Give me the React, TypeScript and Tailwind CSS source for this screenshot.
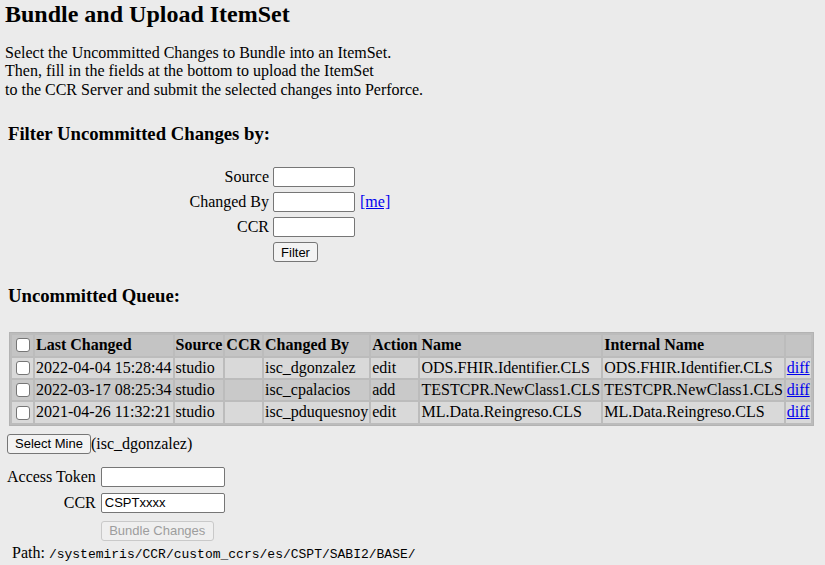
import React from 'react';

const rows = [
  { changed: '2022-04-04 15:28:44', source: 'studio', ccr: '', by: 'isc_dgonzalez', action: 'edit', name: 'ODS.FHIR.Identifier.CLS', internal: 'ODS.FHIR.Identifier.CLS' },
  { changed: '2022-03-17 08:25:34', source: 'studio', ccr: '', by: 'isc_cpalacios', action: 'add', name: 'TESTCPR.NewClass1.CLS', internal: 'TESTCPR.NewClass1.CLS' },
  { changed: '2021-04-26 11:32:21', source: 'studio', ccr: '', by: 'isc_pduquesnoy', action: 'edit', name: 'ML.Data.Reingreso.CLS', internal: 'ML.Data.Reingreso.CLS' },
];

const inputCls =
  "h-[20px] border border-[#767676] rounded-[2px] bg-white px-[3px] text-[13px] font-['Liberation_Sans',Arial,sans-serif] outline-none";
const buttonBase =
  "h-[20px] border rounded-[3px] px-[7px] text-[13px] leading-none font-['Liberation_Sans',Arial,sans-serif]";
const buttonCls = `${buttonBase} border-[#767676] bg-[#f3f3f3] text-black`;
const disabledCls = `${buttonBase} border-[#c9c9c9] bg-[#efefef] text-[#9d9d9d]`;
const checkCls =
  "appearance-none block w-[14px] h-[14px] border border-[#767676] rounded-[3px] bg-white ml-[3px] mr-[2px]";

export default function App() {
  return (
    <div className="min-h-[565px] bg-[#ebebeb] px-[5px] font-['Liberation_Serif','Times_New_Roman',serif] text-[16px] leading-[18.4px] text-black">
      <h1 className="text-[24px] font-bold leading-[28px]">Bundle and Upload ItemSet</h1>
      <p className="mt-[16px]">
        Select the Uncommitted Changes to Bundle into an ItemSet.
        <br />
        Then, fill in the fields at the bottom to upload the ItemSet
        <br />
        to the CCR Server and submit the selected changes into Perforce.
      </p>

      <h3 className="mt-[24px] pl-[3px] text-[18.72px] font-bold leading-[21.5px]">Filter Uncommitted Changes by:</h3>

      {/* Filter form */}
      <div className="mt-[20px] grid grid-cols-[264px_auto] auto-rows-[25px] items-center gap-x-[4px]">
        <span className="text-right">Source</span>
        <input className={`${inputCls} w-[82px]`} />
        <span className="text-right">Changed By</span>
        <div className="flex items-center gap-[5px]">
          <input className={`${inputCls} w-[82px]`} />
          <a href="#" className="text-[#0000ee] underline">[me]</a>
        </div>
        <span className="text-right">CCR</span>
        <input className={`${inputCls} w-[82px]`} />
        <span />
        <div>
          <button className={`${buttonCls} w-[45px] px-0`}>Filter</button>
        </div>
      </div>

      <h3 className="mt-[20px] pl-[3px] text-[18.72px] font-bold leading-[21.5px]">Uncommitted Queue:</h3>

      {/* Queue table */}
      <table className="mt-[26px] ml-[4px] border-separate border-spacing-[2px] border border-[#b3b3b3] bg-[#bcbcbc]">
        <thead>
          <tr className="bg-[#c4c4c4]">
            <th className="p-[1px]"><input type="checkbox" className={checkCls} /></th>
            <th className="p-[1px] text-left whitespace-nowrap">Last Changed</th>
            <th className="p-[1px] text-left">Source</th>
            <th className="p-[1px] text-left">CCR</th>
            <th className="p-[1px] text-left whitespace-nowrap">Changed By</th>
            <th className="p-[1px] text-left">Action</th>
            <th className="p-[1px] text-left">Name</th>
            <th className="p-[1px] text-left whitespace-nowrap">Internal Name</th>
            <th className="p-[1px]"></th>
          </tr>
        </thead>
        <tbody>
          {rows.map((r, i) => (
            <tr key={r.changed} className={i % 2 === 1 ? 'bg-[#c9c9c9]' : 'bg-[#d9d9d9]'}>
              <td className="p-[1px]"><input type="checkbox" className={checkCls} /></td>
              <td className="p-[1px] whitespace-nowrap">{r.changed}</td>
              <td className="p-[1px]">{r.source}</td>
              <td className="p-[1px]">{r.ccr}</td>
              <td className="p-[1px] whitespace-nowrap">{r.by}</td>
              <td className="p-[1px]">{r.action}</td>
              <td className="p-[1px] whitespace-nowrap">{r.name}</td>
              <td className="p-[1px] whitespace-nowrap">{r.internal}</td>
              <td className="p-[1px]"><a href="#" className="text-[#0000ee] underline">diff</a></td>
            </tr>
          ))}
        </tbody>
      </table>

      <div className="mt-[8px] ml-[2px] flex items-center">
        <button className={`${buttonCls} w-[84px]`}>Select Mine</button>
        <span>(isc_dgonzalez)</span>
      </div>

      {/* Upload form */}
      <div className="mt-[13px] ml-[2px] grid grid-cols-[auto_auto] justify-start items-center gap-x-[5px] gap-y-[6px]">
        <span className="text-right whitespace-nowrap">Access Token</span>
        <input className={`${inputCls} w-[124px]`} />
        <span className="text-right">CCR</span>
        <input className={`${inputCls} w-[124px]`} defaultValue="CSPTxxxx" />
        <span />
        <div className="pt-[2px]">
          <button disabled className={`${disabledCls} w-[113px]`}>Bundle Changes</button>
        </div>
      </div>

      <div className="mt-[3px] ml-[7px]">
        Path: <span className="font-['Liberation_Mono','Courier_New',monospace] text-[13px]">/systemiris/CCR/custom_ccrs/es/CSPT/SABI2/BASE/</span>
      </div>
    </div>
  );
}
